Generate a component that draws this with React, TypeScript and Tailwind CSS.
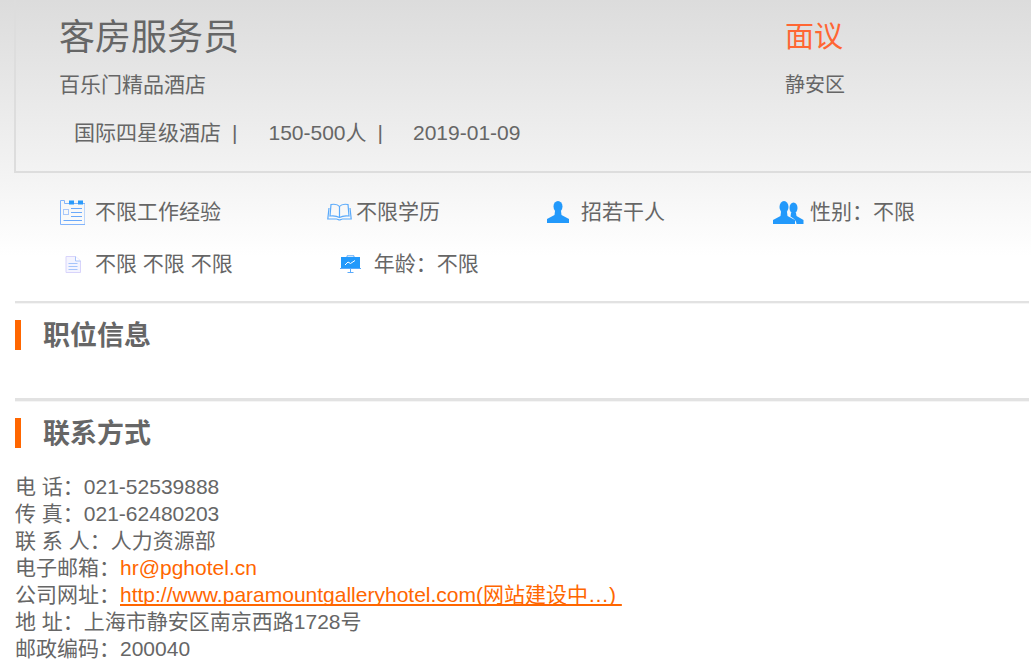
const font = "font-['Liberation_Sans','Noto_Sans_CJK_SC',sans-serif]"

const CalendarIcon = () => (
  <svg width="25" height="25" viewBox="0 0 25 25" fill="none">
    <path d="M.5 .5h4v3h20.500v21H.5z" stroke="#82b4fb" strokeWidth="1" />
    <rect x="9" y="0.5" width="5" height="4" fill="#2b9bfb" />
    <rect x="18" y="0.5" width="5" height="4" fill="#2b9bfb" />
    <rect x="3.5" y="9.5" width="5" height="5" stroke="#a9c8fb" />
    <path d="M11 8.500h11M11 12.500h11M11 16.500h11M3.500 20.500h18.500" stroke="#6aa9fb" />
  </svg>
)

const BookIcon = () => (
  <svg width="25" height="18" viewBox="0 0 25 18" fill="none" stroke="#5aaafb" strokeWidth="1.2">
    <path d="M12.500 3.500C11 1.500 7 1 4 1.500L3 13c3.500-.5 7 0 9.500 1.500C15 13 18.500 12.500 22 13L21 1.500C18 1 14 1.500 12.500 3.500V14.500" />
    <path d="M2 5L.8 16h8.700c1 0 2 1 3 1s2-1 3-1h8.700L23 5" />
  </svg>
)

const UserIcon = () => (
  <svg width="22" height="22" viewBox="0 0 22 22" fill="#2299fb">
    <ellipse cx="11" cy="5.500" rx="4.500" ry="5.500" />
    <path d="M8 10h6l.5 4 7.500 4v4H0v-4l7.500-4z" />
  </svg>
)

const UsersIcon = () => (
  <svg width="31" height="23" viewBox="0 0 31 23" fill="#2299fb">
    <ellipse cx="20.500" cy="7" rx="4" ry="5.500" />
    <path d="M18 12h5l.5 3 7 4v4h-7c0-3-2-5-6-7.500z" />
    <ellipse cx="11" cy="6" rx="4.500" ry="6" />
    <path d="M8 11h6l.5 4 7.500 4v4H0v-4l7.500-4z" />
  </svg>
)

const DocIcon = () => (
  <svg width="16" height="17" viewBox="0 0 16 17" fill="none">
    <path d="M1 .5h9.500L15.500 5v11.500H1z" fill="#f4f4ff" stroke="#d8d4fb" />
    <path d="M10.500 .5V5h5" stroke="#a9c4fb" fill="#ffffff" />
    <path d="M3.500 7.500h9M3.500 10.500h9M3.500 13.500h9" stroke="#a5c4fb" />
  </svg>
)

const BoardIcon = () => (
  <svg width="21" height="18" viewBox="0 0 21 18" fill="none">
    <path d="M7 2V.8h7V2" stroke="#5aaafb" />
    <rect x="1" y="2" width="19" height="11" fill="#2299fb" />
    <path d="M0 13.500h21" stroke="#5aaafb" />
    <path d="M5 10l3-3 2.500 1.500L15 5.500" stroke="#ffffff" />
    <path d="M10.500 14v3M7.500 17.500h6" stroke="#5aaafb" />
  </svg>
)

const SectionTitle = ({ title }: { title: string }) => (
  <div className="flex h-[30px] items-center">
    <div className="h-[30px] w-[6px] bg-[#ff6600]" />
    <h2 className="ml-[22px] pt-[2px] text-[27px] font-bold leading-[30px] text-[#666666]">{title}</h2>
  </div>
)

const Fact = ({ icon, text, gap }: { icon: React.ReactNode; text: string; gap: string }) => (
  <div className="flex items-center">
    {icon}
    <span className={gap}>{text}</span>
  </div>
)

export default function App() {
  return (
    <div className={`${font} h-[667px] w-[1031px] overflow-hidden bg-white text-[#666666]`}>
      <div className="h-[301px] bg-gradient-to-b from-[#dcdcdc] via-[#f4f4f4] via-[60%] to-white to-[85%]">
        <div className="ml-[14px] h-[173px] border-b-2 border-l-2 border-[#dddddd] pl-[43px] pt-[15px]">
          <div className="flex">
            <h1 className="w-[726px] text-[36px] font-normal leading-[45px]">客房服务员</h1>
            <div className="text-[29px] leading-[45px] text-[#ff6633]">面议</div>
          </div>
          <div className="mt-[3px] flex text-[21px] leading-[44px]">
            <div className="w-[726px]">百乐门精品酒店</div>
            <div className="text-[20px]">静安区</div>
          </div>
          <div className="mt-[4px] flex pl-[15px] text-[21px] leading-[44px]">
            <span>国际四星级酒店</span>
            <span className="ml-[11px]">|</span>
            <span className="ml-[31px]">150-500人</span>
            <span className="ml-[11px]">|</span>
            <span className="ml-[30px]">2019-01-09</span>
          </div>
        </div>
        <div className="ml-[60px] grid h-[52px] grid-cols-[267px_220px_226px_1fr] items-center pt-[26px] text-[21px] leading-[26px]">
          <Fact icon={<CalendarIcon />} text="不限工作经验" gap="ml-[10px]" />
          <Fact icon={<BookIcon />} text="不限学历" gap="ml-[4px]" />
          <Fact icon={<UserIcon />} text="招若干人" gap="ml-[12px]" />
          <Fact icon={<UsersIcon />} text="性别：不限" gap="ml-[6px]" />
        </div>
        <div className="ml-[65px] mt-[26px] flex h-[26px] items-center text-[21px]">
          <DocIcon />
          <span className="ml-[14px]">不限 不限 不限</span>
          <div className="ml-[107px]">
            <BoardIcon />
          </div>
          <span className="ml-[13px]">年龄：不限</span>
        </div>
      </div>

      <div className="ml-[15px] mr-[2px]">
        <div className="h-[3px] border-b border-[#f5f5f5] bg-[#e2e2e2]" />
        <div className="mt-[16px]">
          <SectionTitle title="职位信息" />
        </div>
        <div className="mt-[48px] h-[4px] border-b border-[#f5f5f5] bg-[#e2e2e2]" />
        <div className="mt-[16px]">
          <SectionTitle title="联系方式" />
        </div>
        <div className="mt-[25px] text-[21px] leading-[27px]">
          <p>电 话：021-52539888</p>
          <p>传 真：021-62480203</p>
          <p>联 系 人：人力资源部</p>
          <p>
            电子邮箱：<a className="text-[#ff6600]">hr@pghotel.cn</a>
          </p>
          <p>
            公司网址：<a className="text-[#ff6600] underline decoration-2 underline-offset-[2px] [text-decoration-skip-ink:none]">http://www.paramountgalleryhotel.com(网站建设中…)&nbsp;</a>
          </p>
          <p>地 址：上海市静安区南京西路1728号</p>
          <p>邮政编码：200040</p>
        </div>
      </div>
    </div>
  )
}
